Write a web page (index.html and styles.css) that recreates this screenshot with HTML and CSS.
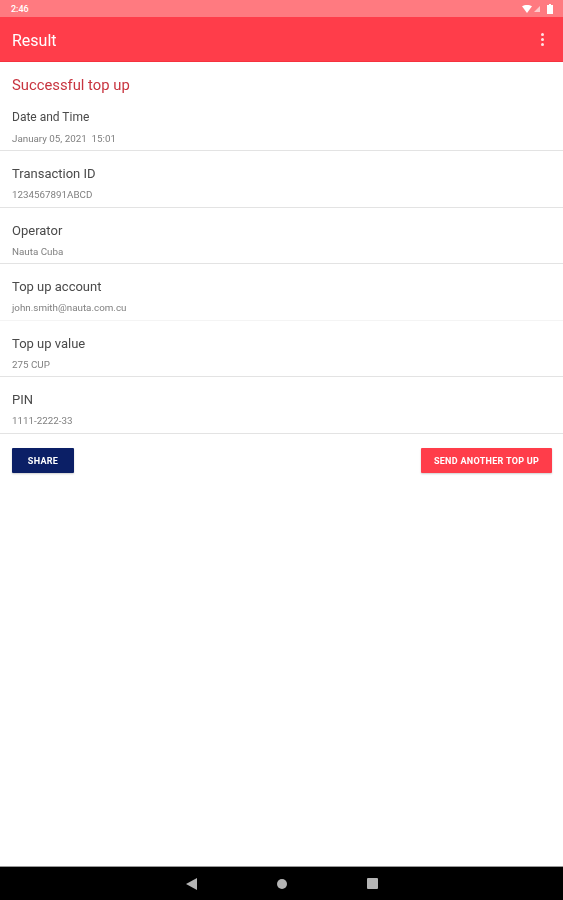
FILE: index.html
```html
<!DOCTYPE html>
<html lang="en">
<head>
  <meta charset="UTF-8" />
  <meta name="viewport" content="width=device-width, initial-scale=1"/>
  <title>Result</title>
  <link rel="stylesheet" href="styles.css">
</head>
<body>

<div class="screen">
  <!-- Status bar -->
  <div class="status-bar">
    <span class="clock">2:46</span>
    <div class="status-icons">
      <svg width="10" height="8" viewBox="0 0 12 9" preserveAspectRatio="none"><path d="M0 1.500C3.500-.5 8.500-.5 12 1.500L6 9z" fill="#fff"/></svg>
      <svg width="6" height="6" viewBox="0 0 8 8"><path d="M8 0v8H0z" fill="#fff" fill-opacity=".6"/></svg>
      <svg class="battery" width="6" height="10" viewBox="0 0 6 10"><path d="M2 0h2v1h2v9H0V1h2z" fill="#fff"/></svg>
    </div>
  </div>

  <!-- App bar -->
  <div class="app-bar">
    <span class="app-title">Result</span>
    <div class="menu-dots"><i></i><i></i><i></i></div>
  </div>

  <div class="content">
    <h2 class="heading">Successful top up</h2>

    <div class="row row-first">
      <div class="row-label">Date and Time</div>
      <div class="row-value">January 05, 2021 &nbsp;15:01</div>
    </div>
    <div class="row">
      <div class="row-label">Transaction ID</div>
      <div class="row-value">1234567891ABCD</div>
    </div>
    <div class="row">
      <div class="row-label">Operator</div>
      <div class="row-value">Nauta Cuba</div>
    </div>
    <div class="row row-faint">
      <div class="row-label">Top up account</div>
      <div class="row-value">john.smith@nauta.com.cu</div>
    </div>
    <div class="row">
      <div class="row-label">Top up value</div>
      <div class="row-value">275 CUP</div>
    </div>
    <div class="row">
      <div class="row-label">PIN</div>
      <div class="row-value">1111-2222-33</div>
    </div>

    <div class="actions">
      <button class="btn btn-share">SHARE</button>
      <button class="btn btn-send">SEND ANOTHER TOP UP</button>
    </div>
  </div>

  <!-- Navigation bar -->
  <div class="nav-bar">
    <svg width="11" height="12" viewBox="0 0 11 12"><path d="M11 0v12L0 6z" fill="#b5b5b5"/></svg>
    <span class="nav-home"></span>
    <span class="nav-recent"></span>
  </div>
</div>

</body>
</html>
```

FILE: styles.css
```css
html, body { margin:0; padding:0; }
body { font-family:Roboto, sans-serif; background:#fff; }

/* reference is an upscaled low-res capture, so everything is slightly soft */
.screen { width:563px; height:900px; display:flex; flex-direction:column; overflow:hidden; filter:blur(.5px); }

.status-bar {
  height:17px; background:#ff7a80; color:#fff;
  display:flex; justify-content:space-between; align-items:center;
  padding:0 10px 0 11px;
}
.clock { font-size:9px; font-weight:500; }
.status-icons { display:flex; align-items:center; gap:2px; }
.battery { margin-left:5px; }

.app-bar {
  height:45px; background:#ff3d4a; color:#fff;
  display:flex; justify-content:space-between; align-items:center;
  padding:0 19px 0 12px;
  box-sizing:border-box;
  border-bottom:1px solid #f5323f;
}
.app-title { font-size:16px; padding-top:3px; }
.menu-dots { display:flex; flex-direction:column; gap:2px; }
.menu-dots i { display:block; width:3px; height:3px; border-radius:50%; background:#ffe3e5; }

.content { flex:1; }
.heading {
  margin:0; padding:14px 12px 0; height:20px;
  font-size:14.800px; font-weight:400; color:#c8343f; line-height:18px;
}
.row {
  height:56.600px; box-sizing:border-box;
  padding:0 12px; border-bottom:1px solid #e3e3e3;
}
.row-first { height:55px; }
.row-faint { border-bottom-color:#f4f4f4; }
.row-label { font-size:13px; color:#4a4a4a; line-height:16px; padding-top:15px; }
.row-value { font-size:9.800px; color:#808080; line-height:12px; margin-top:7px; }
.row-first .row-label { font-size:12px; padding-top:13px; }
.row-first .row-value { margin-top:8px; }

.actions { display:flex; justify-content:space-between; padding:14px 11px 0 12px; }
.btn {
  height:25px; border:none; border-radius:1px; color:#fff; padding:2px 0 0;
  font-family:Roboto, sans-serif; font-size:9px; font-weight:700; letter-spacing:.3px;
  box-shadow:0 1px 2px rgba(0,0,0,.2);
}
.btn-share { width:62px; background:#0b1f66; }
.btn-send { width:131px; background:#ff3d4a; }

.nav-bar {
  height:34px; background:#000; border-top:1px solid #999; box-sizing:border-box;
  display:flex; justify-content:center; align-items:center; gap:80px;
}
.nav-home { width:10px; height:10px; border-radius:50%; background:#b5b5b5; }
.nav-recent { width:11px; height:11px; border-radius:1px; background:#b5b5b5; }
```
